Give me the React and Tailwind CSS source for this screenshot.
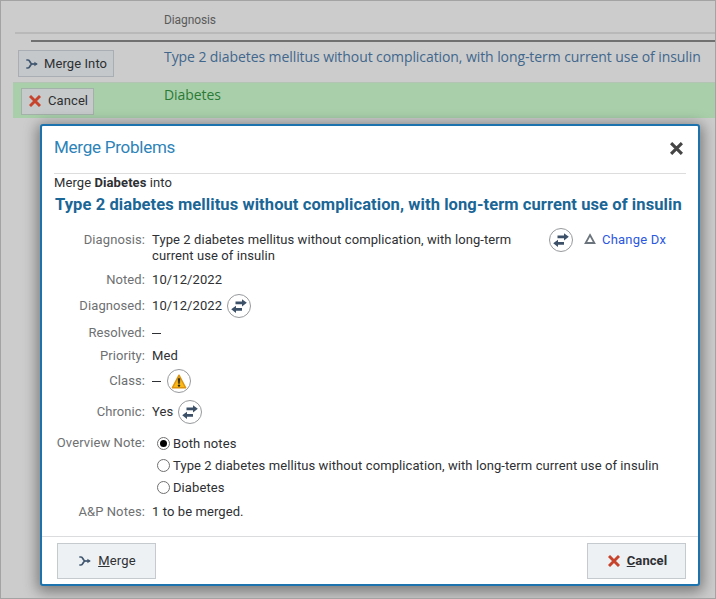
function MergeIcon({ className = "" }) {
  return (
    <svg className={`block shrink-0 ${className}`} width="12" height="12" viewBox="0 0 12 12" fill="none" stroke="#40576f" strokeWidth="1.7">
      <path d="M0.3 2H2C4.2 2 4 6 6.2 6C4 6 4.2 10 2 10H0.3" />
      <path d="M5.5 6H10.5" />
      <path d="M8.4 3.7L11.8 6L8.4 8.3Z" fill="#40576f" stroke="none" />
    </svg>
  );
}

function CrossIcon({ size = 12, color = "#c8432b", className = "" }) {
  return (
    <svg className={`block shrink-0 ${className}`} width={size} height={size} viewBox="0 0 12 12" fill="none" stroke={color} strokeWidth="2.9">
      <path d="M1 1L11 11M11 1L1 11" />
    </svg>
  );
}

function Circle({ children }) {
  return (
    <span className="flex h-6 w-6 shrink-0 items-center justify-center rounded-full border-[1.5px] border-[#97999c] bg-white">
      {children}
    </span>
  );
}

function Swap() {
  return (
    <Circle>
      <svg width="18" height="16" viewBox="0 0 18 16" className="block shrink-0" fill="#3c5068">
        <path d="M5.5 3.4H12V1.2L16.8 4.8L12 8.4V6.2H5.5Z" />
        <path d="M12 9.9H6V7.7L1.2 11.3L6 14.9V12.7H12Z" />
      </svg>
    </Circle>
  );
}

function Warning() {
  return (
    <Circle>
      <svg width="16" height="15" viewBox="0 0 16 15" className="block shrink-0">
        <path d="M8 1.2L14.7 13.8H1.3Z" fill="#fbb917" stroke="#dc9410" strokeWidth="1.4" strokeLinejoin="round" />
        <path d="M7 4.4H9L8.6 9.6H7.4Z" fill="#262626" stroke="#262626" strokeWidth="0.4" />
        <circle cx="8" cy="11.6" r="1.2" fill="#262626" />
      </svg>
    </Circle>
  );
}

function Row({ label, height, children }) {
  return (
    <div className={`flex items-center ${height}`}>
      <div className="w-[103px] shrink-0 text-right text-[#6e7072]">{label}</div>
      <div className="ml-[7px] flex items-center">{children}</div>
    </div>
  );
}

function Dash() {
  return <span className="mr-[6px] h-4 w-[9px] pt-[8px]"><span className="block h-px w-full bg-[#2e3033]" /></span>;
}

function Radio({ checked, children }) {
  return (
    <label className="flex h-[22px] items-center pl-[5px]">
      <span className="mr-[3px] flex h-[13px] w-[13px] items-center justify-center rounded-full border border-[#707070] bg-white">
        {checked && <span className="h-[7px] w-[7px] rounded-full bg-black" />}
      </span>
      <span className="pt-px">{children}</span>
    </label>
  );
}

export default function App() {
  return (
    <div className="relative h-[599px] w-[716px] overflow-hidden border border-[#a3a3a3] bg-[#cccccc] font-['Roboto',sans-serif] text-[13px] leading-4 tracking-[0.09px] whitespace-nowrap text-[#2e3033]">
      <div className="ml-[14px] h-[33px] border-b-2 border-[#b9b9b9] pt-[11px] pl-[149px]">
        <span className="block text-xs tracking-[-0.1px] text-[#5b5b5b]">Diagnosis</span>
      </div>
      <div className="ml-[30px] h-2 border-b-2 border-[#707070]" />
      <div className="flex h-[40px] pl-[17px]">
        <button className="mt-[8px] flex h-[27px] w-[96px] items-center border border-[#a9aeb4] bg-[#c4c8cb] pl-[7px]">
          <MergeIcon />
          <span className="ml-[6px]">Merge Into</span>
        </button>
        <span className="mt-[6px] ml-[50px] font-['Open_Sans',sans-serif] text-[14px] leading-[18px] tracking-[-0.082px] text-[#41678c]">Type 2 diabetes mellitus without complication, with long-term current use of insulin</span>
      </div>
      <div className="ml-3 flex h-[36px] border-t border-[#b3c4b4] bg-[#a8cfaa] pl-2">
        <button className="mt-[5px] flex h-[27px] w-[73px] items-center border border-[#a4b0aa] bg-[#c6caca] pl-[7px]">
          <CrossIcon className="-mt-px" />
          <span className="-mt-px ml-[7px]">Cancel</span>
        </button>
        <span className="mt-[3px] ml-[70px] font-['Open_Sans',sans-serif] text-[14px] leading-[18px] tracking-[-0.082px] text-[#2b7a35]">Diabetes</span>
      </div>

      <section className="absolute top-[123px] left-[39px] flex h-[462px] w-[660px] flex-col rounded-[3px] border-2 border-[#1c73ae] bg-white shadow-[0_3px_14px_3px_rgba(0,0,0,0.4)]">
        <header className="mx-3 flex h-12 shrink-0 items-center justify-between border-b border-[#dddddd]">
          <h1 className="mt-[-5px] text-[17px] tracking-[-0.25px] text-[#2d83b8]">Merge Problems</h1>
          <CrossIcon size={13} color="#454545" className="mr-[3px] -mt-[3px]" />
        </header>
        <p className="ml-3 mt-px h-4">
          Merge <b>Diabetes</b> into
        </p>
        <h2 className="ml-[13px] mt-[2px] h-6 text-[16.5px] leading-6 font-bold tracking-[0.09px] text-[#1a6696]">Type 2 diabetes mellitus without complication, with long-term current use of insulin</h2>

        <div className="mt-[14px] flex h-9 shrink-0">
          <div className="w-[103px] pt-px text-right text-[#6e7072]">Diagnosis:</div>
          <div className="ml-[7px] w-[397px] pt-px">
            Type 2 diabetes mellitus without complication, with long-term
            <br />
            current use of insulin
          </div>
          <div className="-mt-[3px]">
            <Swap />
          </div>
          <svg width="12" height="12" viewBox="0 0 12 12" className="mt-[2px] ml-[11px] block" fill="none" stroke="#6b747c" strokeWidth="1.8">
            <path d="M6 2L10.4 10H1.6Z" />
          </svg>
          <span className="mt-px ml-[6px] tracking-[0.2px] text-[#2b58e0]">Change Dx</span>
        </div>
        <Row label="Noted:" height="h-[26px]">10/12/2022</Row>
        <Row label="Diagnosed:" height="h-[26px]">
          <span className="mr-[5px]">10/12/2022</span>
          <Swap />
        </Row>
        <Row label="Resolved:" height="h-[27px]"><Dash /></Row>
        <Row label="Priority:" height="h-[20px]">Med</Row>
        <Row label="Class:" height="h-[30px]">
          <Dash />
          <Warning />
        </Row>
        <Row label="Chronic:" height="h-[32px]">
          <span className="mr-[5px]">Yes</span>
          <Swap />
        </Row>
        <div className="mt-[4px] flex">
          <div className="w-[103px] pt-[3px] text-right text-[#6e7072]">Overview Note:</div>
          <div className="ml-[7px]">
            <Radio checked>Both notes</Radio>
            <Radio>Type 2 diabetes mellitus without complication, with long-term current use of insulin</Radio>
            <Radio>Diabetes</Radio>
          </div>
        </div>
        <Row label="A&P Notes:" height="h-[28px]">1 to be merged.</Row>

        <footer className="mt-auto flex h-[48px] shrink-0 justify-between border-t border-[#dadcde] pr-3 pl-[15px] pt-[6px]">
          <button className="flex h-9 w-[99px] items-center justify-center border border-[#c5cacf] bg-[#edf1f4] pl-[2px]">
            <MergeIcon />
            <span className="ml-[7px] tracking-[0.2px]"><u>M</u>erge</span>
          </button>
          <button className="flex h-9 w-[99px] items-center justify-center border border-[#c5cacf] bg-[#edf1f4] pl-[2px] font-bold">
            <CrossIcon />
            <span className="ml-[7px]"><u>C</u>ancel</span>
          </button>
        </footer>
      </section>
    </div>
  );
}
